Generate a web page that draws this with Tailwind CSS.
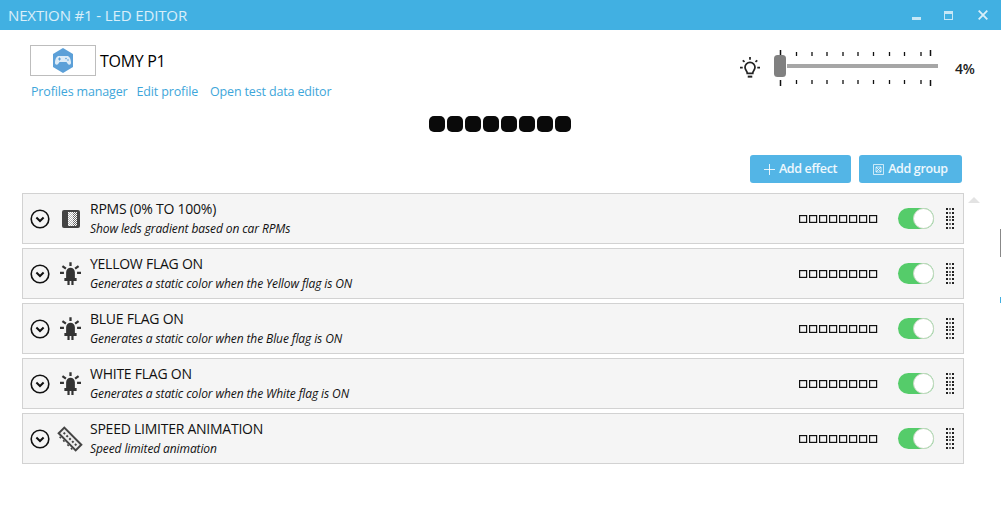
<!DOCTYPE html>
<html lang="en">
  <head>
    <meta charset="UTF-8" />
    <title>LED Editor</title>
    <script src="https://cdn.jsdelivr.net/npm/@tailwindcss/browser@4"></script>
  </head>
  <body class="bg-white">
    <!-- shared icons -->
    <svg class="hidden">
      <symbol id="chevron" viewBox="0 0 20 20">
        <circle cx="10" cy="10" r="8.8" fill="none" stroke="#111" stroke-width="1.6" />
        <path d="M6.4 8.6 10 12l3.6-3.4" fill="none" stroke="#111" stroke-width="2" />
      </symbol>
      <symbol id="led" viewBox="0 0 24 26">
        <path d="M7 11.500a5 5 0 0 1 10 0V18h2v3.500H5V18h2z" fill="#333" />
        <path d="M8.500 21h2.500v5H8.500zM13 21h2.500v5H13z" fill="#333" />
        <path d="M10.700 0h2.600v4.500h-2.600zM0 11h4.500v2.500H0zM19.500 11H24v2.500h-4.500z" fill="#333" />
        <path d="m3.500 3.500 4 3-1.500 2-4-3zM20.500 3.500l-4 3 1.500 2 4-3z" fill="#333" />
      </symbol>
      <symbol id="leds" viewBox="0 0 80 8">
        <g fill="none" stroke="#111" stroke-width="1.200">
          <rect x="0.600" y="0.600" width="7" height="6.800" />
          <rect x="10.600" y="0.600" width="7" height="6.800" />
          <rect x="20.600" y="0.600" width="7" height="6.800" />
          <rect x="30.600" y="0.600" width="7" height="6.800" />
          <rect x="40.600" y="0.600" width="7" height="6.800" />
          <rect x="50.600" y="0.600" width="7" height="6.800" />
          <rect x="60.600" y="0.600" width="7" height="6.800" />
          <rect x="70.600" y="0.600" width="7" height="6.800" />
        </g>
      </symbol>
      <symbol id="grip" viewBox="0 0 8 21">
        <g fill="#222">
          <path d="M0 0h2v2H0zM0 4h2v2H0zM0 8h2v2H0zM0 11h2v2H0zM0 15h2v2H0zM0 19h2v2H0z" />
          <path d="M6 0h2v2H6zM6 4h2v2H6zM6 8h2v2H6zM6 11h2v2H6zM6 15h2v2H6zM6 19h2v2H6z" />
          <path opacity=".6" d="M3 0h2v2H3zM3 4h2v2H3zM3 8h2v2H3zM3 11h2v2H3zM3 15h2v2H3zM3 19h2v2H3z" />
        </g>
      </symbol>
    </svg>

    <div class="relative w-[1001px] h-[532px] overflow-hidden bg-white font-['Open_Sans',sans-serif]">
      <!-- title bar -->
      <div class="flex items-center justify-between h-[30px] bg-[#41b0e2] pl-2 pr-[13px]">
        <span class="text-[15px] text-white/80 tracking-[-0.13px]">NEXTION #1 - LED EDITOR</span>
        <div class="flex items-center gap-[23px]">
          <span class="mt-[7px] w-[9px] h-[3px] bg-white/70"></span>
          <span class="w-[9px] h-[9px] border border-white/70 border-t-[3px]"></span>
          <svg class="ml-[2px] w-[10px] h-[10px]" viewBox="0 0 10 10"><path d="M.7.7l8.600 8.600M9.300.7.700 9.300" stroke="#fff" stroke-opacity=".8" stroke-width="1.800" /></svg>
        </div>
      </div>

      <!-- profile + brightness -->
      <div class="flex justify-between h-[85px] pt-[15px] pl-[30px] pr-[26px]">
        <div>
          <div class="flex items-center gap-1">
            <div class="flex items-center justify-center w-[66px] h-[31px] border border-[#bdbdbd]">
              <svg class="w-[22px] h-[25px]" viewBox="0 0 22 25">
                <path d="M11 0l10 6v13l-10 6-10-6V6z" fill="#5ca0d8" />
                <path d="M7 8h8c2.500 0 3.500 2.500 4 6 .4 3-2.200 3.500-3.500 1.500L14.500 14h-7l-1 1.500C5.200 17.500 2.600 17 3 14c.5-3.500 1.500-6 4-6z" fill="#dcebf7" />
                <path d="M6 10.500h3v1H6zM7 9.500h1v3H7z" fill="#5ca0d8" />
                <circle cx="14" cy="10.500" r=".8" fill="#5ca0d8" />
                <circle cx="16" cy="12" r=".8" fill="#5ca0d8" />
              </svg>
            </div>
            <span class="text-[16px] text-black tracking-[-0.3px]">TOMY P1</span>
          </div>
          <div class="flex gap-[9px] mt-[7px] ml-px text-[12.500px] text-[#3ea6da] tracking-[-0.15px]">
            <a>Profiles manager</a>
            <a>Edit profile</a>
            <a class="ml-[3px]">Open test data editor</a>
          </div>
        </div>

        <div class="flex items-center h-[36px] mt-[5px]">
          <svg class="w-[20px] h-[22px] mr-[14px]" viewBox="0 0 22 24" fill="none" stroke="#222" stroke-width="1.900">
            <path d="M8 18c0-3-2.500-3.500-2.500-6.700a5.500 5.500 0 0 1 11 0c0 3.200-2.500 3.700-2.500 6.700z" />
            <path d="M8.500 21.500h5" stroke-width="2.200" />
            <path d="M11 0v3M3 3.500l2 1.800M19 3.500l-2 1.800M0 11.500h3M19 11.500h3" />
          </svg>
          <svg class="w-[170px] h-[36px]" viewBox="0 0 170 36">
            <g stroke="#111" stroke-width="1.300">
              <path d="M6.500 0v6M6.500 30v6" stroke-width="1.500" />
              <path d="M22.500 2v4M38 2v4M53 2v4M69 2v4M84 2v4M99.500 2v4M115.500 2v4M130.500 2v4M147 2v4" />
              <path d="M22.500 30v4M38 30v4M53 30v4M69 30v4M84 30v4M99.500 30v4M115.500 30v4M130.500 30v4M147 30v4" />
              <path d="M156.500 0v6M156.500 30v6" stroke-width="1.500" />
            </g>
            <rect x="13" y="14" width="151" height="4" fill="#a6a6a6" />
            <rect x="0" y="5" width="12" height="22" rx="3.500" fill="#808080" />
          </svg>
          <span class="ml-[11px] w-[20px] text-[14px] font-semibold text-[#222] tracking-[-0.2px]">4%</span>
        </div>
      </div>

      <!-- preview leds -->
      <div class="flex justify-center gap-[2px] h-[18px] pt-px mr-px">
        <span class="w-4 h-4 rounded-[5px] bg-[#0a0a0a]"></span>
        <span class="w-4 h-4 rounded-[5px] bg-[#0a0a0a]"></span>
        <span class="w-4 h-4 rounded-[5px] bg-[#0a0a0a]"></span>
        <span class="w-4 h-4 rounded-[5px] bg-[#0a0a0a]"></span>
        <span class="w-4 h-4 rounded-[5px] bg-[#0a0a0a]"></span>
        <span class="w-4 h-4 rounded-[5px] bg-[#0a0a0a]"></span>
        <span class="w-4 h-4 rounded-[5px] bg-[#0a0a0a]"></span>
        <span class="w-4 h-4 rounded-[5px] bg-[#0a0a0a]"></span>
      </div>

      <!-- toolbar -->
      <div class="flex justify-end gap-2 mt-[22px] pr-[39px]">
        <button class="flex items-center justify-center gap-[4px] w-[101px] h-[28px] rounded-[3px] bg-[#53b5e6] text-[12.500px] font-semibold text-white/90 tracking-[-0.35px]">
          <svg class="w-[11px] h-[11px]" viewBox="0 0 11 11"><path d="M5.500 0v11M0 5.500h11" stroke="#fff" stroke-opacity=".85" /></svg>
          Add effect
        </button>
        <button class="flex items-center justify-center gap-[4px] w-[103px] h-[28px] rounded-[3px] bg-[#53b5e6] text-[12.500px] font-semibold text-white/90 tracking-[-0.35px]">
          <svg class="w-[11px] h-[11px]" viewBox="0 0 11 11" fill="none" stroke="#fff" stroke-opacity=".7"><path d="M.5.5h10v10H.5zM3 3h5v5H3zM3 3l5 5M8 3 3 8" /></svg>
          Add group
        </button>
      </div>

      <!-- effects -->
      <div class="flex flex-col gap-1 mt-[10px] ml-[22px] w-[942px]">
        <div class="flex items-center h-[51px] border border-[#d2d2d2] bg-[#f5f5f5] pl-[7px] pr-[9px]">
          <svg class="w-5 h-5 shrink-0"><use href="#chevron" /></svg>
          <svg class="w-[18px] h-[18px] shrink-0 ml-[12px]" viewBox="0 0 18 18">
            <defs>
              <pattern id="dither" width="2" height="2" patternUnits="userSpaceOnUse">
                <rect width="1.200" height="1.200" fill="#fff" />
                <rect x="1" y="1" width="1" height="1" fill="#fff" />
              </pattern>
            </defs>
            <rect width="18" height="18" rx="2" fill="#444" />
            <rect x="6" y="2" width="9" height="14" fill="url(#dither)" />
            <rect x="6" y="2" width="5" height="14" fill="#fff" fill-opacity=".5" />
          </svg>
          <div class="ml-[10px] min-w-0 flex-1 translate-y-px">
            <div class="text-[14px] leading-[18px] text-[#111] tracking-[-0.25px]">RPMS (0% TO 100%)</div>
            <div class="mt-px text-[12px] leading-[20px] italic text-[#111] tracking-[-0.1px]">Show leds gradient based on car RPMs</div>
          </div>
          <svg class="w-[80px] h-[8px] shrink-0"><use href="#leds" /></svg>
          <div class="flex justify-end items-center w-[36px] h-[21px] ml-[19px] rounded-full bg-[#55cc6a]"><span class="w-[21px] h-[21px] rounded-full bg-white border border-[#c9d8c4]"></span></div>
          <svg class="w-[8px] h-[21px] shrink-0 ml-[12px]"><use href="#grip" /></svg>
        </div>

        <div class="flex items-center h-[51px] border border-[#d2d2d2] bg-[#f5f5f5] pl-[7px] pr-[9px]">
          <svg class="w-5 h-5 shrink-0"><use href="#chevron" /></svg>
          <svg class="w-[21px] h-[23px] shrink-0 ml-[10px]"><use href="#led" /></svg>
          <div class="ml-[9px] min-w-0 flex-1 translate-y-px">
            <div class="text-[14px] leading-[18px] text-[#111] tracking-[-0.25px]">YELLOW FLAG ON</div>
            <div class="mt-px text-[12px] leading-[20px] italic text-[#111] tracking-[-0.1px]">Generates a static color when the Yellow flag is ON</div>
          </div>
          <svg class="w-[80px] h-[8px] shrink-0"><use href="#leds" /></svg>
          <div class="flex justify-end items-center w-[36px] h-[21px] ml-[19px] rounded-full bg-[#55cc6a]"><span class="w-[21px] h-[21px] rounded-full bg-white border border-[#c9d8c4]"></span></div>
          <svg class="w-[8px] h-[21px] shrink-0 ml-[12px]"><use href="#grip" /></svg>
        </div>

        <div class="flex items-center h-[51px] border border-[#d2d2d2] bg-[#f5f5f5] pl-[7px] pr-[9px]">
          <svg class="w-5 h-5 shrink-0"><use href="#chevron" /></svg>
          <svg class="w-[21px] h-[23px] shrink-0 ml-[10px]"><use href="#led" /></svg>
          <div class="ml-[9px] min-w-0 flex-1 translate-y-px">
            <div class="text-[14px] leading-[18px] text-[#111] tracking-[-0.25px]">BLUE FLAG ON</div>
            <div class="mt-px text-[12px] leading-[20px] italic text-[#111] tracking-[-0.1px]">Generates a static color when the Blue flag is ON</div>
          </div>
          <svg class="w-[80px] h-[8px] shrink-0"><use href="#leds" /></svg>
          <div class="flex justify-end items-center w-[36px] h-[21px] ml-[19px] rounded-full bg-[#55cc6a]"><span class="w-[21px] h-[21px] rounded-full bg-white border border-[#c9d8c4]"></span></div>
          <svg class="w-[8px] h-[21px] shrink-0 ml-[12px]"><use href="#grip" /></svg>
        </div>

        <div class="flex items-center h-[51px] border border-[#d2d2d2] bg-[#f5f5f5] pl-[7px] pr-[9px]">
          <svg class="w-5 h-5 shrink-0"><use href="#chevron" /></svg>
          <svg class="w-[21px] h-[23px] shrink-0 ml-[10px]"><use href="#led" /></svg>
          <div class="ml-[9px] min-w-0 flex-1 translate-y-px">
            <div class="text-[14px] leading-[18px] text-[#111] tracking-[-0.25px]">WHITE FLAG ON</div>
            <div class="mt-px text-[12px] leading-[20px] italic text-[#111] tracking-[-0.1px]">Generates a static color when the White flag is ON</div>
          </div>
          <svg class="w-[80px] h-[8px] shrink-0"><use href="#leds" /></svg>
          <div class="flex justify-end items-center w-[36px] h-[21px] ml-[19px] rounded-full bg-[#55cc6a]"><span class="w-[21px] h-[21px] rounded-full bg-white border border-[#c9d8c4]"></span></div>
          <svg class="w-[8px] h-[21px] shrink-0 ml-[12px]"><use href="#grip" /></svg>
        </div>

        <div class="flex items-center h-[51px] border border-[#d2d2d2] bg-[#f5f5f5] pl-[7px] pr-[9px]">
          <svg class="w-5 h-5 shrink-0"><use href="#chevron" /></svg>
          <svg class="w-[24px] h-[24px] shrink-0 ml-[8px] overflow-visible" viewBox="0 0 24 24">
            <g transform="rotate(45 12 12)">
              <rect x="-1" y="7" width="26" height="10" fill="#444" />
              <rect x="1" y="9" width="22" height="6" fill="#eee" />
              <path d="M3 11h2v2H3zM7 11h2v2H7zM11 11h2v2h-2zM15 11h2v2h-2zM19 11h2v2h-2z" fill="#444" />
              <path d="M3 17h2v1.500H3zM8 17h2v1.500H8zM14 17h2v1.500h-2zM19 17h2v1.500h-2z" fill="#444" />
            </g>
          </svg>
          <div class="ml-[8px] min-w-0 flex-1 translate-y-px">
            <div class="text-[14px] leading-[18px] text-[#111] tracking-[-0.25px]">SPEED LIMITER ANIMATION</div>
            <div class="mt-px text-[12px] leading-[20px] italic text-[#111] tracking-[-0.1px]">Speed limited animation</div>
          </div>
          <svg class="w-[80px] h-[8px] shrink-0"><use href="#leds" /></svg>
          <div class="flex justify-end items-center w-[36px] h-[21px] ml-[19px] rounded-full bg-[#55cc6a]"><span class="w-[21px] h-[21px] rounded-full bg-white border border-[#c9d8c4]"></span></div>
          <svg class="w-[8px] h-[21px] shrink-0 ml-[12px]"><use href="#grip" /></svg>
        </div>
      </div>

      <!-- scroll arrow and window edge -->
      <span class="absolute left-[968px] top-[197px] w-0 h-0 border-x-[6px] border-x-transparent border-b-[6px] border-b-[#e3e3e3]"></span>
      <span class="absolute right-0 top-[229px] w-px h-[28px] bg-[#888]"></span>
      <span class="absolute right-0 top-[297px] w-px h-[6px] bg-[#41b0e2]"></span>
    </div>
  </body>
</html>
